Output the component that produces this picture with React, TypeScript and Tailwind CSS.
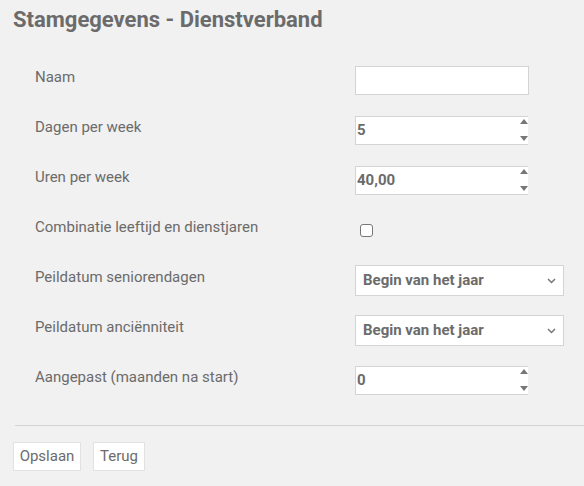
import React from "react";

function NumberBox({ value }: { value: string }) {
  return (
    <div className="relative flex h-[29px] w-[173px] items-center border-y border-l border-[#d4d4d4] bg-white pl-[1px] text-[15px] font-bold text-[#6b6b6b]">
      {value}
      <div className="absolute right-0 top-[2px] flex h-[22px] flex-col justify-between">
        <svg width="8" height="5" viewBox="0 0 8 5">
          <path d="M0 5 L4 0 L8 5 Z" fill="#777" />
        </svg>
        <svg width="8" height="5" viewBox="0 0 8 5">
          <path d="M0 0 L4 5 L8 0 Z" fill="#777" />
        </svg>
      </div>
    </div>
  );
}

function SelectBox({ value }: { value: string }) {
  return (
    <div className="flex h-[31px] w-[209px] items-center justify-between border border-[#d4d4d4] bg-white pl-[7px] pr-[7px] text-[15px] font-bold text-[#6b6b6b]">
      <span>{value}</span>
      <svg width="9" height="6" viewBox="0 0 9 6">
        <path d="M1 1 L4.5 4.5 L8 1" stroke="#777" strokeWidth="1.5" fill="none" />
      </svg>
    </div>
  );
}

export default function App() {
  const rows: { label: string; field: React.ReactNode }[] = [
    { label: "Naam", field: <div className="h-[29px] w-[174px] border border-[#d4d4d4] bg-white" /> },
    { label: "Dagen per week", field: <NumberBox value="5" /> },
    { label: "Uren per week", field: <NumberBox value="40,00" /> },
    {
      label: "Combinatie leeftijd en dienstjaren",
      field: <div className="ml-[5px] h-[13px] w-[13px] rounded-[3px] border border-[#777] bg-white" />,
    },
    { label: "Peildatum seniorendagen", field: <SelectBox value="Begin van het jaar" /> },
    { label: "Peildatum anciënniteit", field: <SelectBox value="Begin van het jaar" /> },
    { label: "Aangepast (maanden na start)", field: <NumberBox value="0" /> },
  ];

  return (
    <div className="min-h-[486px] w-[584px] bg-[#f1f1f1] font-['Roboto',sans-serif] text-[#6b6b6b]">
      <h1 className="pl-[13px] pt-[5px] text-[22px] font-bold leading-[30px] text-[#6b6b6b]">
        Stamgegevens - Dienstverband
      </h1>
      <div className="flex flex-col pt-[31px]">
        {rows.map((r) => (
          <div key={r.label} className="flex h-[50px] items-start">
            <div className="w-[355px] pl-[35px] pt-[1px] text-[15px] leading-[21px]">{r.label}</div>
            <div className="flex h-[29px] items-center">{r.field}</div>
          </div>
        ))}
      </div>
      <div className="ml-[15px] mt-[9px] border-t border-[#d4d4d4]" />
      <div className="flex gap-[12px] pl-[13px] pt-[16px]">
        <button className="h-[29px] w-[68px] border border-[#e2e2e2] bg-white text-[15px] text-[#6b6b6b]">Opslaan</button>
        <button className="h-[29px] w-[52px] border border-[#e2e2e2] bg-white text-[15px] text-[#6b6b6b]">Terug</button>
      </div>
    </div>
  );
}
